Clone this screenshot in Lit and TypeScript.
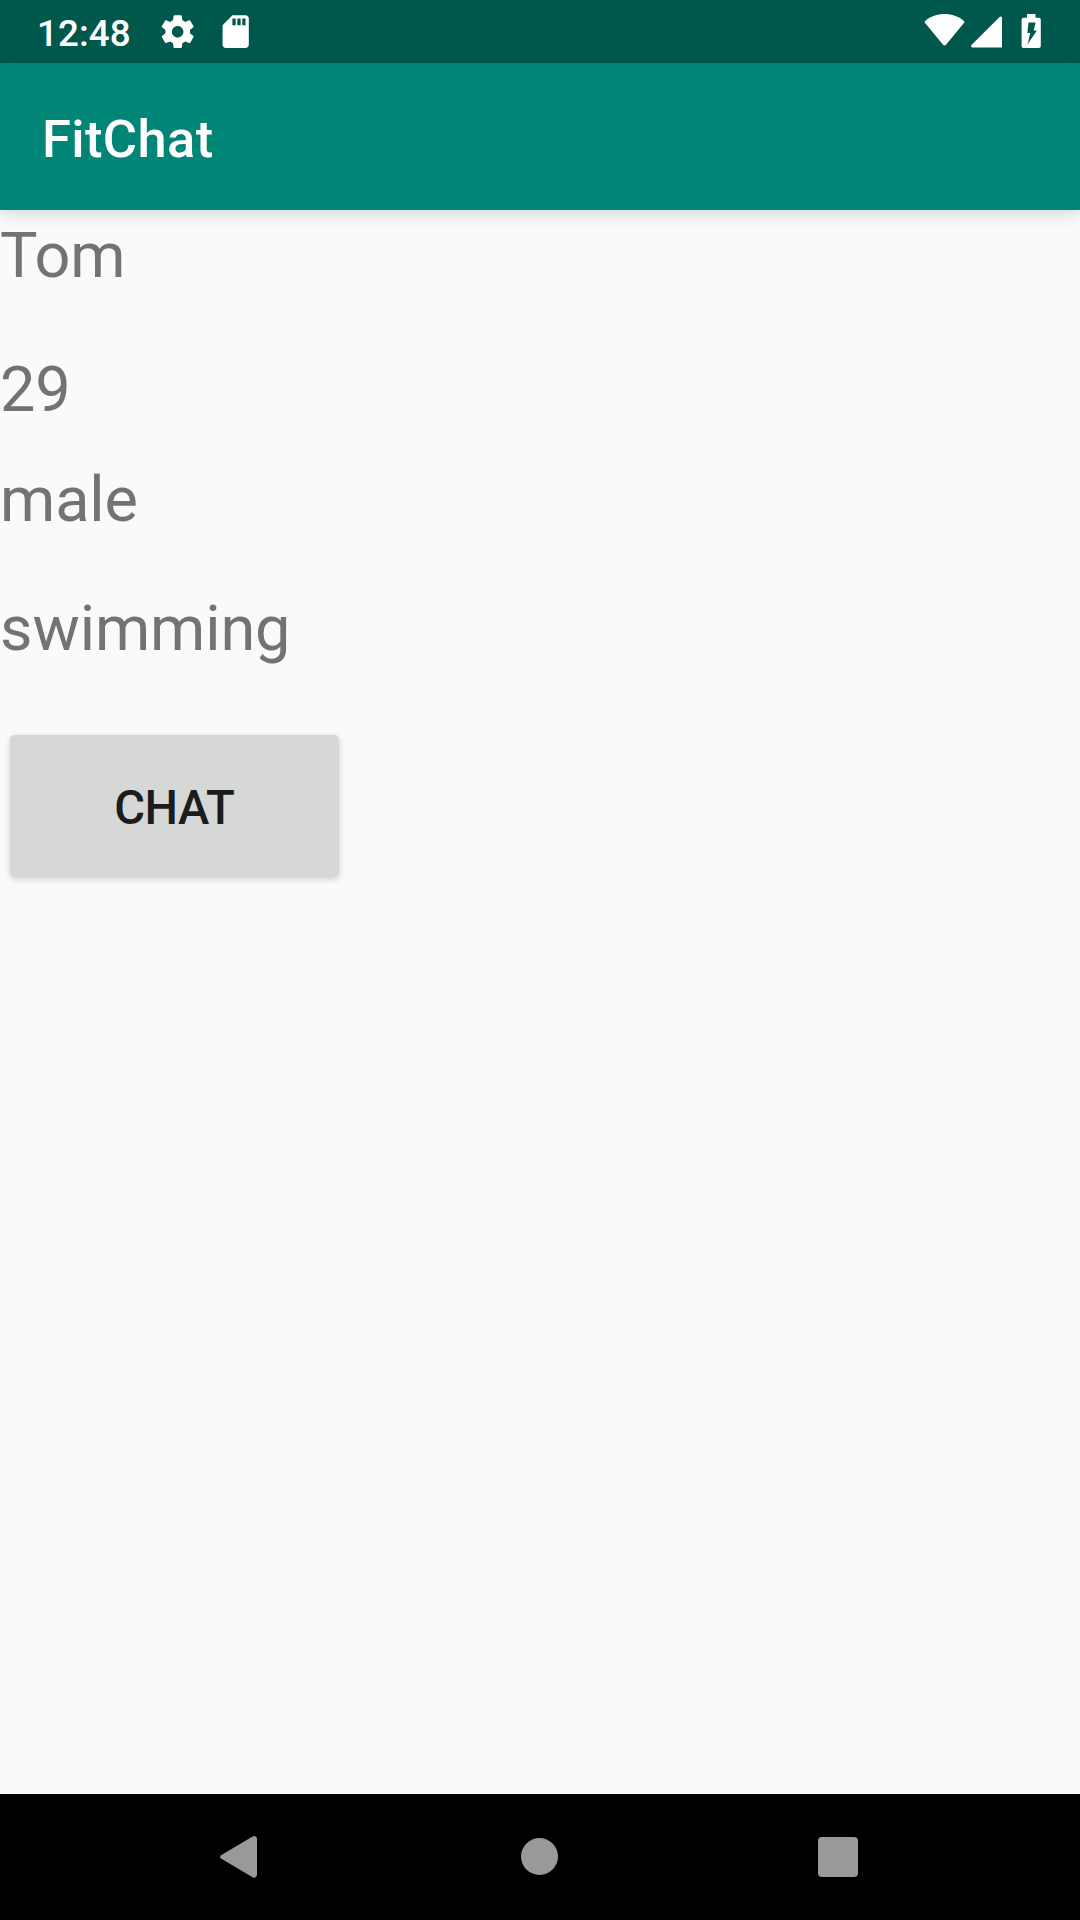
import { LitElement, html, css } from "lit";
import { customElement, property } from "lit/decorators.js";

@customElement("status-bar")
class StatusBar extends LitElement {
  @property() time = "";

  static styles = css`
    :host {
      display: flex;
      align-items: flex-start;
      justify-content: space-between;
      box-sizing: border-box;
      height: 63px;
      padding: 0 37px;
      background: #00574b;
      color: #fff;
    }
    .group {
      display: flex;
      align-items: flex-start;
    }
    .clock {
      margin-top: 12px;
      font-size: 36.75px;
      line-height: 43px;
      font-weight: 500;
      letter-spacing: 0.1px;
    }
    svg {
      display: block;
      fill: currentColor;
    }
    .gear {
      margin: 11.8px 0 0 27.3px;
    }
    .card {
      margin: 11.8px 0 0 18.8px;
    }
    .wifi {
      margin-top: 14px;
    }
    .cell {
      margin: 15.5px 0 0 6px;
    }
    .battery {
      margin: 14px 2px 0 19.5px;
    }
  `;

  render() {
    return html`
      <div class="group">
        <span class="clock">${this.time}</span>
        <svg class="gear" width="39.375" height="39.375" viewBox="0 0 24 24">
          <path
            d="M19.43 12.98c.04-.32.07-.64.07-.98s-.03-.66-.07-.98l2.11-1.65c.19-.15.24-.42.12-.64l-2-3.46c-.12-.22-.39-.3-.61-.22l-2.49 1c-.52-.4-1.08-.73-1.69-.98l-.38-2.65C14.46 2.18 14.25 2 14 2h-4c-.25 0-.46.18-.49.42l-.38 2.65c-.61.25-1.17.59-1.69.98l-2.49-1c-.23-.09-.49 0-.61.22l-2 3.46c-.13.22-.07.49.12.64l2.11 1.65c-.04.32-.07.65-.07.98s.03.66.07.98l-2.11 1.65c-.19.15-.24.42-.12.64l2 3.46c.12.22.39.3.61.22l2.49-1c.52.4 1.08.73 1.69.98l.38 2.65c.03.24.24.42.49.42h4c.25 0 .46-.18.49-.42l.38-2.65c.61-.25 1.17-.59 1.69-.98l2.49 1c.23.09.49 0 .61-.22l2-3.46c.12-.22.07-.49-.12-.64l-2.11-1.65zM12 15.5c-1.93 0-3.5-1.57-3.5-3.5s1.57-3.5 3.5-3.5 3.5 1.57 3.5 3.5-1.57 3.5-3.5 3.5z"
          />
        </svg>
        <svg class="card" width="39.375" height="39.375" viewBox="0 0 24 24">
          <path
            d="M18 2h-8L4.02 8 4 20c0 1.1.9 2 2 2h12c1.1 0 2-.9 2-2V4c0-1.1-.9-2-2-2zm-6 6h-2V4h2v4zm3 0h-2V4h2v4zm3 0h-2V4h2v4z"
          />
        </svg>
      </div>
      <div class="group">
        <svg class="wifi" width="41" height="32" viewBox="0 0 41 32">
          <path
            d="M.9 8.800Q.2 7.800 1.200 6.900C6.500 2.400 13.200.1 20.500.1S34.500 2.400 39.800 6.900Q40.800 7.800 40.100 8.800L22 30.800Q20.500 32.400 19 30.800Z"
          />
        </svg>
        <svg class="cell" width="31" height="32" viewBox="0 0 31 32">
          <path d="M31 1.500V31.500H1.200Q-.6 30.600.5 29L28.800.7Q30.300-.2 31 1.500Z" />
        </svg>
        <svg class="battery" width="20" height="34" viewBox="0 0 20 34">
          <path
            fill-rule="evenodd"
            d="M6 0H14.500V3.700H17.800Q19.800 3.700 19.800 5.700V32Q19.800 34 17.800 34H2.500Q.6 34 .6 32V5.700Q.6 3.700 2.500 3.700H6ZM7.500 8.600L6.400 19H9.200L6.700 30.200L15.900 16.600H12.700L14.600 8.600Z"
          />
        </svg>
      </div>
    `;
  }
}

@customElement("nav-bar")
class NavBar extends LitElement {
  static styles = css`
    :host {
      display: flex;
      align-items: flex-start;
      box-sizing: border-box;
      height: 126px;
      padding-left: 219px;
      background: #000;
    }
    svg {
      display: block;
      fill: #999;
    }
    .back {
      margin-top: 41px;
    }
    .home {
      margin: 44px 0 0 263px;
    }
    .recent {
      margin: 43px 0 0 259px;
    }
  `;

  render() {
    return html`
      <svg class="back" width="39" height="44" viewBox="0 0 39 44">
        <path
          d="M38 4V40Q37.500 43.500 34 42.500L2 23.500Q.2 22 2 20.300L34 1.300Q37.500.4 38 4Z"
        />
      </svg>
      <svg class="home" width="38" height="38" viewBox="0 0 38 38">
        <circle cx="18.500" cy="18.500" r="18.500" />
      </svg>
      <svg class="recent" width="40" height="40" viewBox="0 0 40 40">
        <rect width="40" height="40" rx="4" />
      </svg>
    `;
  }
}

@customElement("app-root")
class AppRoot extends LitElement {
  static styles = css`
    :host {
      display: flex;
      flex-direction: column;
      height: 1920px;
      overflow: hidden;
      background: #fafafa;
      font-family: Roboto, "Liberation Sans", sans-serif;
    }
    .toolbar {
      display: flex;
      align-items: center;
      flex: none;
      box-sizing: border-box;
      height: 147px;
      padding: 5px 42px 0;
      background: #008577;
      color: #fff;
      font-size: 52.5px;
      line-height: 62px;
      font-weight: 500;
      letter-spacing: 0.35px;
      box-shadow: 0 4px 16px rgba(0, 0, 0, 0.14);
    }
    .profile {
      display: flex;
      flex-direction: column;
      align-items: flex-start;
      flex: 1;
      padding-top: 9px;
      color: #737373;
      font-size: 63px;
      line-height: 74px;
      letter-spacing: -0.1px;
    }
    .age {
      margin-top: 60px;
    }
    .gender {
      margin-top: 36px;
    }
    .hobby {
      margin-top: 55px;
    }
    .chat {
      box-sizing: border-box;
      width: 329.5px;
      height: 141.5px;
      margin: 69px 0 0 9.5px;
      padding: 4.5px 0 0;
      border: 0;
      border-radius: 5px;
      background: #d6d8d7;
      color: #1c1c1c;
      font: 500 47.25px Roboto, "Liberation Sans", sans-serif;
      letter-spacing: -0.5px;
      box-shadow: 0 2px 6px rgba(0, 0, 0, 0.18);
    }
    status-bar,
    nav-bar {
      flex: none;
    }
  `;

  render() {
    return html`
      <status-bar time="12:48"></status-bar>
      <header class="toolbar">FitChat</header>
      <main class="profile">
        <span class="name">Tom</span>
        <span class="age">29</span>
        <span class="gender">male</span>
        <span class="hobby">swimming</span>
        <button class="chat">CHAT</button>
      </main>
      <nav-bar></nav-bar>
    `;
  }
}
